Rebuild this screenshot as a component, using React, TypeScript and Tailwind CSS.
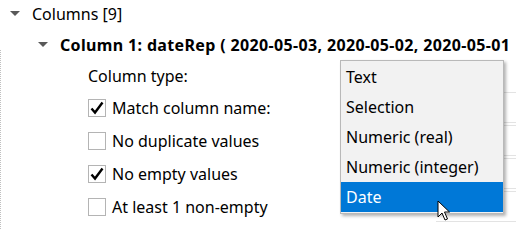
import React from 'react';

const font = { fontFamily: '"Segoe UI", "Noto Sans", "Open Sans", sans-serif' };

function Caret() {
  return (
    <svg width="10" height="6" viewBox="0 0 10 6" className="shrink-0">
      <path d="M0 0 L10 0 L5 5 Z" fill="#595959" />
    </svg>
  );
}

function CheckBox({ checked }: { checked?: boolean }) {
  return (
    <div className="w-[18px] h-[18px] border border-[#b4b4b4] bg-white flex items-center justify-center shrink-0">
      {checked && (
        <svg width="14" height="14" viewBox="0 0 14 14">
          <path d="M1.5 7.5 L5 11.5 L12.5 1.5" fill="none" stroke="#000" strokeWidth="2.4" />
        </svg>
      )}
    </div>
  );
}

const rules = [
  { label: 'Match column name:', checked: true, fieldDark: true },
  { label: 'No duplicate values', checked: false, fieldDark: false },
  { label: 'No empty values', checked: true, fieldDark: true },
  { label: 'At least 1 non-empty', checked: false, fieldDark: false },
];

const types = ['Text', 'Selection', 'Numeric (real)', 'Numeric (integer)', 'Date'];

export default function App() {
  return (
    <div className="relative w-[516px] h-[229px] overflow-hidden bg-white text-black text-[16px]" style={font}>
      {/* tree guide line */}
      <div className="absolute left-0 top-[50px] bottom-0 border-l border-dotted border-[#c0c0c0]" />

      <div className="flex flex-col">
        <div className="h-[28px] flex items-center pl-[10px] gap-[12px]">
          <Caret />
          <span>Columns [9]</span>
        </div>
        <div className="h-[33px] flex items-center pl-[38px] gap-[12px] whitespace-nowrap">
          <Caret />
          <span className="font-bold tracking-[0.35px]">Column 1: dateRep ( 2020-05-03, 2020-05-02, 2020-05-01</span>
        </div>
        <div className="h-[30px] flex items-center pl-[88px]">Column type:</div>
        {rules.map((r) => (
          <div key={r.label} className="h-[33px] flex items-center pl-[88px] whitespace-nowrap">
            <div className="w-[417px] flex items-center gap-[6px]">
              <CheckBox checked={r.checked} />
              <span>{r.label}</span>
            </div>
            <div
              className={`w-[80px] h-[31px] shrink-0 flex items-center pl-[2px] border-y border-[#e3e3e3] ${
                r.fieldDark ? 'text-black' : 'text-[#a0a0a0]'
              }`}
            >
              V
            </div>
          </div>
        ))}
      </div>

      {/* dropdown list */}
      <div className="absolute left-[340px] top-[60px] w-[164px] border border-[#b9b9b9] bg-[#f2f2f2] py-px shadow-[2px_2px_3px_rgba(0,0,0,0.3)]">
        {types.map((t) => (
          <div
            key={t}
            className={`h-[30px] flex items-center pl-[5px] ${t === 'Date' ? 'bg-[#0078d7] text-white' : ''}`}
          >
            {t}
          </div>
        ))}
      </div>

      {/* mouse pointer */}
      <svg className="absolute left-[437px] top-[200px]" width="14" height="22" viewBox="0 0 14 22">
        <path d="M1 1 L1 17 L5 13 L8 20 L10.5 19 L7.5 12 L12.5 12 Z" fill="#fff" stroke="#000" strokeWidth="1" strokeLinejoin="round" />
      </svg>
    </div>
  );
}
